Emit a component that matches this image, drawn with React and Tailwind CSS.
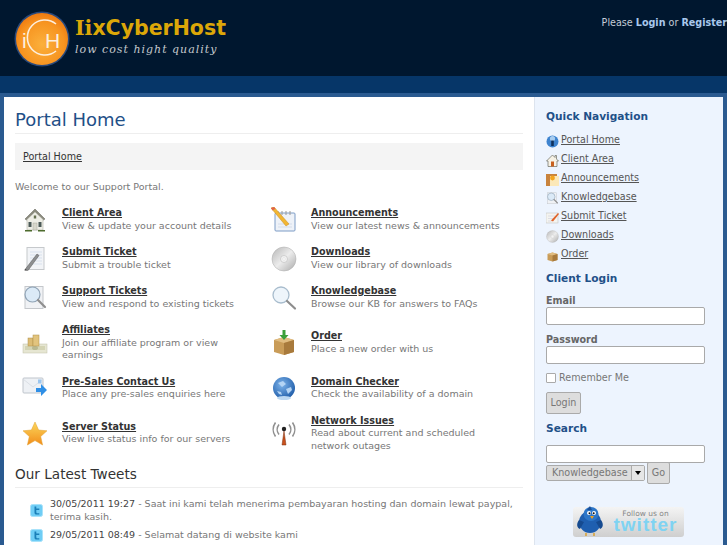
const House = ({ size = 26 }) => (
  <svg width={size} height={size} viewBox="0 0 26 26">
    <path d="M3 12 13 2l10 10-1.500 1L13 5 4.500 13z" fill="#8a8a7c" stroke="#5f5f55" strokeWidth=".5" />
    <path d="M5 12.500 13 5l8 7.500V23H5z" fill="#eeeee6" stroke="#b4b4a8" strokeWidth=".6" />
    <rect x="6.500" y="15" width="3" height="5" fill="#4c5a58" />
    <rect x="16.500" y="15" width="3" height="5" fill="#4c5a58" />
    <rect x="11" y="16" width="4" height="7" fill="#d8d8cc" stroke="#a0a094" strokeWidth=".4" />
    <rect x="11.800" y="8.500" width="2.400" height="3" fill="#66704f" />
    <path d="M3 23h7v1.500H3zM16 23h7v1.500h-7z" fill="#4d6b2d" />
  </svg>
);

const SmallHouse = ({ size = 13 }) => (
  <svg width={size} height={size} viewBox="0 0 13 13">
    <path d="M6.500 1 .500 7h1.500v5.500h9V7h1.500L10.500 5V1.500h-1.500v2z" fill="#f6f2e6" stroke="#6a6a60" strokeWidth=".7" />
    <rect x="5" y="7.500" width="3" height="5" fill="#c8601e" />
  </svg>
);

const NotePen = ({ size = 26 }) => (
  <svg width={size} height={size} viewBox="0 0 26 26">
    <rect x="5" y="1.500" width="17" height="22" fill="#f2f4f7" stroke="#c6c9cc" />
    <path d="M8 6h12M8 9h12M8 12h12M8 15h12M8 18h12" stroke="#cfd9e8" strokeWidth=".7" />
    <path d="M3 23.500 15 8l2 1.500L6 24.500z" fill="#8d8f90" stroke="#555" strokeWidth=".5" />
    <path d="M2.500 24.500 3 23l2.200 1.400z" fill="#333" />
  </svg>
);

const MagDoc = ({ size = 26 }) => (
  <svg width={size} height={size} viewBox="0 0 26 26">
    <rect x="3" y="1.500" width="18" height="22" fill="#f0f2f5" stroke="#c4c7cb" />
    <circle cx="10.500" cy="9.500" r="7.500" fill="#dbeaf7" stroke="#8fa3b5" strokeWidth="1.200" />
    <path d="M16 15l7 7" stroke="#8f8f8f" strokeWidth="2.200" strokeLinecap="round" />
  </svg>
);

const Coins = ({ size = 26 }) => (
  <svg width={size} height={size} viewBox="0 0 26 26">
    <rect x="1" y="14" width="24" height="9" fill="#e6e6d2" stroke="#c0c0a8" strokeWidth=".5" />
    <rect x="3" y="16" width="20" height="4" fill="#d4d4b4" />
    <ellipse cx="13" cy="18" rx="3" ry="2" fill="#b8b890" />
    <rect x="6" y="8" width="5" height="8" fill="#dcbc74" stroke="#b09048" strokeWidth=".5" />
    <rect x="11" y="5" width="6" height="11" fill="#e2c47e" stroke="#b09048" strokeWidth=".5" />
  </svg>
);

const MailArrow = ({ size = 26 }) => (
  <svg width={size} height={size} viewBox="0 0 26 26">
    <rect x="1" y="2" width="20" height="15" rx="1" fill="#eef1f5" stroke="#bfc5cc" />
    <path d="M1 3l10 8 10-8" fill="none" stroke="#d4d9df" strokeWidth=".8" />
    <rect x="16" y="3.500" width="3.500" height="4" fill="#9cc6ee" />
    <path d="M14 12h5V8l6 6-6 6v-4h-5z" fill="#2f8fe6" />
  </svg>
);

const Star = ({ size = 26 }) => (
  <svg width={size} height={size} viewBox="0 0 26 26">
    <defs>
      <linearGradient id="starfill" x1="0" y1="0" x2="0" y2="1">
        <stop offset="0" stopColor="#fbd75c" />
        <stop offset="1" stopColor="#f28d1a" />
      </linearGradient>
    </defs>
    <path d="M13 1l3.600 8 8.400.8-6.300 5.700 1.900 8.500L13 19.600 5.400 24l1.900-8.500L1 9.800 9.400 9z" fill="url(#starfill)" stroke="#e0a030" strokeWidth=".5" />
  </svg>
);

const PadPencil = ({ size = 26 }) => (
  <svg width={size} height={size} viewBox="0 0 26 26">
    <rect x="4" y="6" width="20" height="18" rx="1" fill="#eef2f8" stroke="#7d9cc6" />
    <path d="M7 4v4M11 4v4M15 4v4M19 4v4" stroke="#9a9a9a" />
    <path d="M7 20h14M7 17h14" stroke="#cdd7e6" strokeWidth=".8" />
    <path d="M0 1l3-1 15 17-3 2z" fill="#f2b632" stroke="#c98a20" strokeWidth=".5" />
    <path d="M0 1l3-1 1.500 1.800-3 1.800z" fill="#e0634a" />
  </svg>
);

const Disc = ({ size = 26 }) => (
  <svg width={size} height={size} viewBox="0 0 26 26">
    <defs>
      <linearGradient id="discfill" x1="0" y1="0" x2="1" y2="1">
        <stop offset="0" stopColor="#b5b5b5" />
        <stop offset=".5" stopColor="#ececec" />
        <stop offset="1" stopColor="#aaaaaa" />
      </linearGradient>
    </defs>
    <circle cx="13" cy="13" r="12" fill="url(#discfill)" stroke="#aaa" strokeWidth=".5" />
    <circle cx="13" cy="13" r="3.500" fill="#f2f2f2" stroke="#bbb" strokeWidth=".6" />
    <circle cx="13" cy="13" r="1.300" fill="#fff" stroke="#ccc" strokeWidth=".4" />
  </svg>
);

const Mag = ({ size = 26 }) => (
  <svg width={size} height={size} viewBox="0 0 26 26">
    <circle cx="10" cy="10" r="8" fill="#eef5fb" stroke="#a8bccd" strokeWidth="1.300" />
    <path d="M16 16l8 7.500" stroke="#8d8d8d" strokeWidth="2.200" strokeLinecap="round" />
  </svg>
);

const Box = ({ size = 26, arrow = true }) => (
  <svg width={size} height={size} viewBox="0 0 26 26">
    <path d="M3 10l10-3 10 3v12l-10 3-10-3z" fill="#c99c58" />
    <path d="M3 10l10 3 10-3-10-3z" fill="#e0bc80" />
    <path d="M13 13v12l10-3V10z" fill="#a87a3c" />
    {arrow && <path d="M11.500 0h3v5h3L13 10 8.500 5h3z" fill="#3aa03a" />}
  </svg>
);

const Globe = ({ size = 26 }) => (
  <svg width={size} height={size} viewBox="0 0 26 26">
    <defs>
      <radialGradient id="globefill" cx=".4" cy=".35" r=".7">
        <stop offset="0" stopColor="#7db3ea" />
        <stop offset="1" stopColor="#1d5ba8" />
      </radialGradient>
    </defs>
    <circle cx="13" cy="12" r="11" fill="url(#globefill)" />
    <path d="M7 7l5-2 3 3-4 3zM15 13l5-2 1 3-4 4zM6 15l4 1 1 3-3-1z" fill="#b4d4f4" />
    <ellipse cx="13" cy="22" rx="7" ry="2" fill="#bcd8f2" />
  </svg>
);

const Antenna = ({ size = 26 }) => (
  <svg width={size} height={size} viewBox="0 0 26 26" fill="none">
    <path d="M13 10l-2 14h4z" fill="#c9501c" stroke="#7a3010" strokeWidth=".5" />
    <circle cx="13" cy="8" r="2.200" fill="#222" />
    <path d="M8 3.500a8 8 0 0 0 0 10M4.500 1.500a12 12 0 0 0 0 14M18 3.500a8 8 0 0 1 0 10M21.500 1.500a12 12 0 0 1 0 14" stroke="#8f8f8f" strokeWidth="1.600" />
  </svg>
);

const InfoGlobe = ({ size = 13 }) => (
  <svg width={size} height={size} viewBox="0 0 13 13">
    <circle cx="6.500" cy="6.500" r="6" fill="#3d83cf" />
    <circle cx="6.500" cy="3.500" r="2.600" fill="#a8cdf0" />
    <path d="M5.200 5.500h2.600V11H5.200z" fill="#10305c" />
  </svg>
);

const SmallAnnounce = ({ size = 13 }) => (
  <svg width={size} height={size} viewBox="0 0 13 13">
    <rect x="0" y="1" width="11" height="12" fill="#c8833c" />
    <rect x="4" y="3" width="9" height="10" fill="#fbe8b8" />
    <circle cx="6.500" cy="5" r="2.400" fill="#f2a41f" />
  </svg>
);

const SmallPen = ({ size = 13 }) => (
  <svg width={size} height={size} viewBox="0 0 13 13">
    <rect x="0" y="2" width="12" height="10" fill="#f4f4f0" stroke="#bbb" strokeWidth=".5" />
    <path d="M2 5h7M2 7.500h6M2 10h4" stroke="#ccd" strokeWidth=".6" />
    <path d="M5 9.500 12 2l1 1-6 7.500z" fill="#e0632a" />
  </svg>
);

const TwitterTile = () => (
  <svg width="13" height="13" viewBox="0 0 13 13">
    <rect x=".500" y=".500" width="12" height="12" rx="2" fill="#6fcdf5" stroke="#a8e2fa" />
    <path d="M4.500 2.500h1.800v2h3v1.600h-3V8c0 .9.500 1.200 1.200 1.200h1.800v1.400H6.500C5.200 10.600 4.500 9.800 4.500 8.400z" fill="#1a7fb8" />
  </svg>
);

const TwitterBird = () => (
  <svg width="32" height="32" viewBox="0 0 32 32">
    <ellipse cx="15" cy="17" rx="11" ry="11" fill="#1f5fb0" />
    <ellipse cx="16" cy="9" rx="7.500" ry="7" fill="#2d76c8" />
    <path d="M15 1l2 4-5 0z" fill="#1a4f96" />
    <circle cx="14" cy="8" r="2" fill="#fff" />
    <circle cx="19" cy="8" r="2" fill="#fff" />
    <circle cx="14.500" cy="8.300" r="1" fill="#111" />
    <circle cx="18.700" cy="8.300" r="1" fill="#111" />
    <path d="M15 11h4l-2 3z" fill="#f0a020" />
    <path d="M4 15c-3 4-2 8 1 9l4-7zM26 15c3 4 2 8-1 9l-4-7z" fill="#154a90" />
    <path d="M11 28v3M19 28v3" stroke="#d8a030" strokeWidth="1.500" />
  </svg>
);

// round orange mark: thin C ring with the i and H lettering set inside it
const LogoMark = () => (
  <svg width="56" height="56" viewBox="0 0 56 56">
    <defs>
      <radialGradient id="logofill" cx=".5" cy=".6" r=".6">
        <stop offset="0" stopColor="#fbb03c" />
        <stop offset=".7" stopColor="#f79420" />
        <stop offset="1" stopColor="#ee7a10" />
      </radialGradient>
    </defs>
    <circle cx="28" cy="28" r="27.500" fill="#3b5f9c" opacity=".7" />
    <circle cx="28" cy="28" r="26" fill="url(#logofill)" />
    <path d="M42 13A17.500 17.500 0 1 0 42 40" fill="none" stroke="#fdeedd" strokeWidth="1.600" />
    <text x="8" y="37" fontSize="21" fill="#fdeedd" fontFamily="Liberation Sans, sans-serif">i</text>
    <text x="31" y="37" fontSize="21" fill="#fdeedd" fontFamily="Liberation Sans, sans-serif">H</text>
  </svg>
);

const homeLinks = [
  [
    { title: 'Client Area', text: 'View & update your account details', Icon: House },
    { title: 'Announcements', text: 'View our latest news & announcements', Icon: PadPencil },
  ],
  [
    { title: 'Submit Ticket', text: 'Submit a trouble ticket', Icon: NotePen },
    { title: 'Downloads', text: 'View our library of downloads', Icon: Disc },
  ],
  [
    { title: 'Support Tickets', text: 'View and respond to existing tickets', Icon: MagDoc },
    { title: 'Knowledgebase', text: 'Browse our KB for answers to FAQs', Icon: Mag },
  ],
  [
    { title: 'Affiliates', text: 'Join our affiliate program or view earnings', Icon: Coins },
    { title: 'Order', text: 'Place a new order with us', Icon: Box },
  ],
  [
    { title: 'Pre-Sales Contact Us', text: 'Place any pre-sales enquiries here', Icon: MailArrow },
    { title: 'Domain Checker', text: 'Check the availability of a domain', Icon: Globe },
  ],
  [
    { title: 'Server Status', text: 'View live status info for our servers', Icon: Star },
    { title: 'Network Issues', text: 'Read about current and scheduled network outages', Icon: Antenna },
  ],
];

const quickNav = [
  { label: 'Portal Home', icon: <InfoGlobe /> },
  { label: 'Client Area', icon: <SmallHouse /> },
  { label: 'Announcements', icon: <SmallAnnounce /> },
  { label: 'Knowledgebase', icon: <MagDoc size={13} /> },
  { label: 'Submit Ticket', icon: <SmallPen /> },
  { label: 'Downloads', icon: <Disc size={13} /> },
  { label: 'Order', icon: <Box size={13} arrow={false} /> },
];

const HomeLink = ({ title, text, Icon }) => (
  <div className="flex items-center">
    <div className="w-[47px] h-[25px] pl-[7px] shrink-0 flex">
      <Icon />
    </div>
    <div className="w-[192px]">
      <a className="block font-bold text-[#333] underline">{title}</a>
      <p className="text-[9.500px] text-[#777]">{text}</p>
    </div>
  </div>
);

const fieldClass = 'block w-[159px] h-[18px] bg-white border border-[#a9a9a9] rounded-[2px]';

export default function App() {
  return (
    <div className="w-[727px] h-[545px] overflow-hidden bg-[#2a5a90] text-[9.600px] leading-[12.500px] font-['DejaVu_Sans',sans-serif]">
      <header className="h-[76px] bg-[#00172f] flex justify-between">
        <div className="flex pl-[14px] pt-[11px]">
          <LogoMark />
          <div className="ml-[5px]">
            <div className="text-[20.500px] leading-[24px] mt-[5px] font-bold text-[#dca708]">
              <span className="font-['DejaVu_Serif',serif]">Ii</span>xCyberHost
            </div>
            <div className="text-[11px] leading-[14px] mt-[3px] tracking-[1px] italic text-[#c4c8cc] font-['DejaVu_Serif',serif]">low cost hight quality</div>
          </div>
        </div>
        <div className="pt-[17px] text-[#c4ccd6] whitespace-nowrap">
          Please <a className="font-bold text-[#a8c8ec]">Login</a> or <a className="font-bold text-[#a8c8ec]">Register</a>
        </div>
      </header>
      <nav className="h-[17px] bg-[#063668]" />
      <div className="h-[4px] bg-[#2a5a90]" />
      <div className="mx-[4px] flex bg-white h-[448px]">
        <main className="w-[530px] pl-[11px] pr-[11px] shrink-0">
          <h1 className="text-[18px] leading-[24px] pt-[11px] pb-[1px] text-[#1f5088] border-b border-[#eeeeee]">Portal Home</h1>
          <div className="mt-[9px] h-[27px] bg-[#f4f4f4] pl-[8px] pt-[1px] flex items-center text-[#333] underline">Portal Home</div>
          <p className="mt-[11px] text-[9.500px] text-[#777]">Welcome to our Support Portal.</p>
          <div className="mt-[6.500px]">
            {homeLinks.map((row) => (
              <div key={row[0].title} className="grid grid-cols-[249px_1fr] py-[7px]">
                {row.map((item) => <HomeLink key={item.title} {...item} />)}
              </div>
            ))}
          </div>
          <h2 className="mt-[7px] text-[13.600px] leading-[17px] pb-[4px] text-[#333] border-b border-[#eeeeee]">Our Latest Tweets</h2>
          <ul className="mt-[10px] pl-[15px] text-[9.500px] text-[#777]">
            <li className="flex gap-[7px] items-start">
              <span className="mt-[6px] shrink-0"><TwitterTile /></span>
              <p><span className="text-[#444]">30/05/2011 19:27</span> - Saat ini kami telah menerima pembayaran hosting dan domain lewat paypal, terima kasih.</p>
            </li>
            <li className="flex gap-[7px] items-start mt-[6px]">
              <span className="shrink-0"><TwitterTile /></span>
              <p><span className="text-[#444]">29/05/2011 08:49</span> - Selamat datang di website kami</p>
            </li>
          </ul>
        </main>
        <aside className="flex-1 bg-[#edf4fe] border-l border-[#dde4ee] pl-[11px] text-[#666]">
          <h3 className="mt-[12px] text-[10.600px] leading-[15px] font-bold text-[#1f5088]">Quick Navigation</h3>
          <ul className="mt-[7px]">
            {quickNav.map((item) => (
              <li key={item.label} className="flex items-center h-[19px] gap-[2px]">
                <span className="w-[13px] shrink-0 flex mt-[1px]">{item.icon}</span>
                <a className="underline text-[#555]">{item.label}</a>
              </li>
            ))}
          </ul>
          <h3 className="mt-[7px] text-[10.600px] leading-[15px] font-bold text-[#1f5088]">Client Login</h3>
          <label className="block mt-[10px] mb-[1px] leading-[10px] font-bold">Email</label>
          <input className={fieldClass} />
          <label className="block mt-[10px] mb-[1px] leading-[10px] font-bold">Password</label>
          <input type="password" className={fieldClass} />
          <div className="mt-[9px] flex items-center gap-[3px] leading-[10px] text-[#777]">
            <span className="w-[10px] h-[10px] bg-white border border-[#aaa] rounded-[1px]" />
            Remember Me
          </div>
          <button className="block mt-[9px] w-[35px] h-[22px] bg-[#dddddd] border border-[#aaa] rounded-[2px] text-[#777]">Login</button>
          <h3 className="mt-[7px] text-[10.600px] leading-[15px] font-bold text-[#1f5088]">Search</h3>
          <input className={`${fieldClass} mt-[9px]`} />
          <div className="flex items-start -mt-[1px]">
            <div className="mt-[3px] w-[99px] h-[16px] bg-[#dddddd] border border-[#aaa] rounded-[2px] text-[#777] flex items-center justify-between pl-[5px]">
              Knowledgebase
              <span className="w-[13px] h-[14px] border-l border-[#aaa] bg-[#e6e6e6] flex items-center justify-center">
                <span className="w-0 h-0 border-x-[3px] border-x-transparent border-t-[4px] border-t-black" />
              </span>
            </div>
            <button className="ml-[2px] w-[23px] h-[22px] bg-[#dddddd] border border-[#aaa] rounded-[2px] text-[#777]">Go</button>
          </div>
          <div className="mt-[23px] ml-[27px] w-[111px] h-[30px] rounded-[3px] bg-[linear-gradient(#f4f4f4,#cfcfcf)] flex">
            <span className="ml-[2px] -mt-[2px]"><TwitterBird /></span>
            <div className="flex-1 text-center">
              <div className="text-[7.500px] leading-[8px] mt-[3px] text-[#888]">Follow us on</div>
              <div className="text-[19px] leading-[14px] tracking-[1px] font-bold text-[#7fd3f2] font-['Liberation_Sans',sans-serif]">twitter</div>
            </div>
          </div>
        </aside>
      </div>
    </div>
  );
}
